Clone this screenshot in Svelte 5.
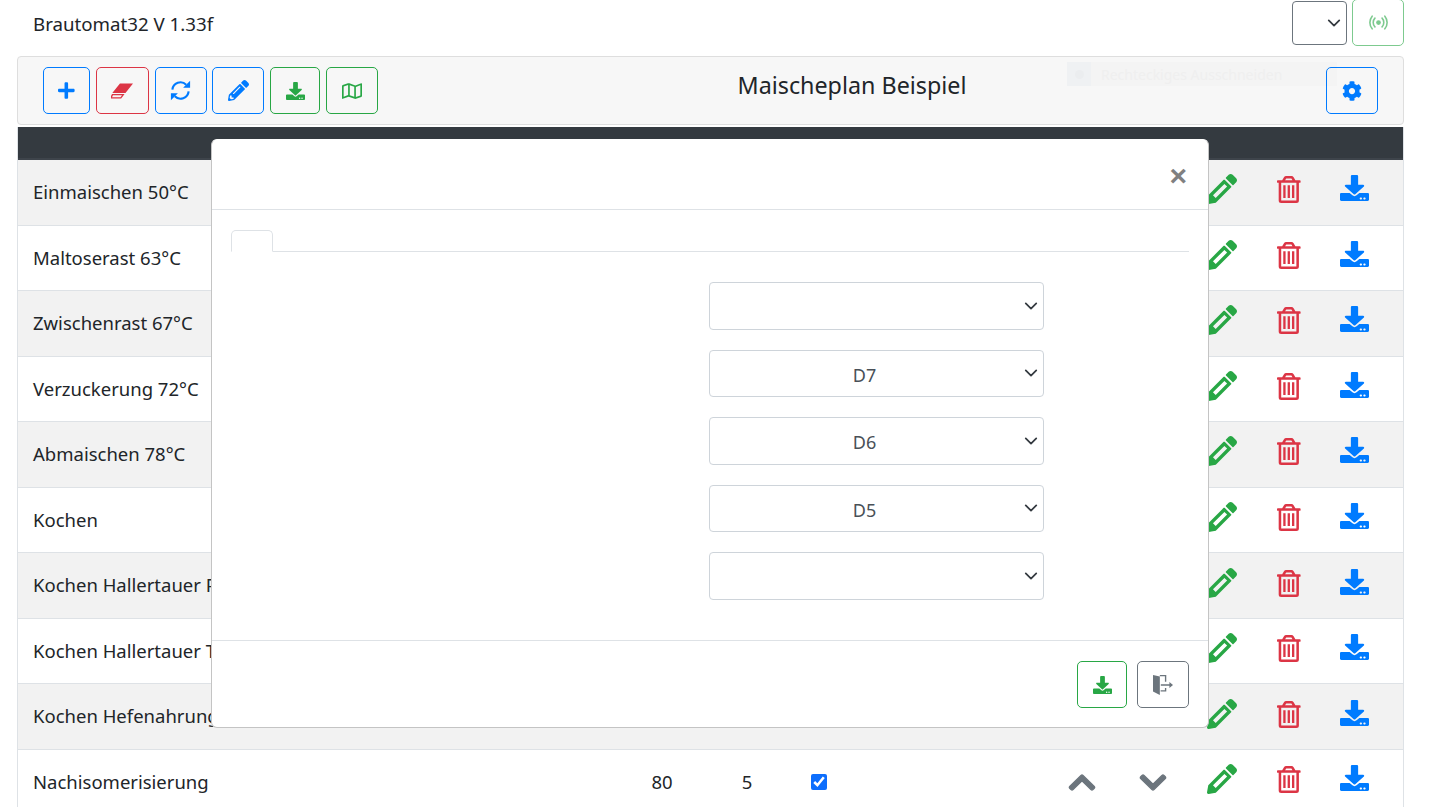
<script>
  const icons = {
    plus: [448, 'M416 208H272V64c0-17.67-14.33-32-32-32h-32c-17.67 0-32 14.33-32 32v144H32c-17.67 0-32 14.33-32 32v32c0 17.67 14.33 32 32 32h144v144c0 17.67 14.33 32 32 32h32c17.67 0 32-14.33 32-32V304h144c17.67 0 32-14.33 32-32v-32c0-17.67-14.33-32-32-32z'],
    eraser: [512, 'M208 80H512L336 300H30zM24 325H316L236 430H0V370zM46 355L24 400H222L256 355z'],
    pencil: [512, 'M497.9 142.1l-46.1 46.1c-4.7 4.7-12.3 4.7-17 0l-111-111c-4.7-4.7-4.7-12.3 0-17l46.1-46.1c18.7-18.7 49.1-18.7 67.9 0l60.1 60.1c18.8 18.7 18.8 49.1 0 67.9zM284.2 99.8L21.6 362.4.4 483.9c-2.9 16.4 11.4 30.6 27.8 27.8l121.5-21.3 262.6-262.6c4.7-4.7 4.7-12.3 0-17l-111-111c-4.8-4.7-12.4-4.7-17.1 0zM124.1 339.9c-5.5-5.5-5.5-14.3 0-19.8l154-154c5.5-5.5 14.3-5.5 19.8 0s5.5 14.3 0 19.8l-154 154c-5.5 5.5-14.3 5.5-19.8 0zM88 424h48v36.3l-64.5 11.3-31.1-31.1L51.7 376H88v48z'],
    pencilOpen: [512, 'M497.9 142.1l-46.1 46.1c-4.7 4.7-12.3 4.7-17 0l-111-111c-4.7-4.7-4.7-12.3 0-17l46.1-46.1c18.7-18.7 49.1-18.7 67.9 0l60.1 60.1c18.8 18.7 18.8 49.1 0 67.9zM284.2 99.8L21.6 362.4.4 483.9c-2.9 16.4 11.4 30.6 27.8 27.8l121.5-21.3 262.6-262.6c4.7-4.7 4.7-12.3 0-17l-111-111c-4.8-4.7-12.4-4.7-17.1 0zM297 169L343 215L148 409L102 363z'],
    download: [512, 'M216 0h80c13.3 0 24 10.7 24 24v168h87.7c17.8 0 26.7 21.5 14.1 34.1L269.7 378.3c-7.5 7.5-19.8 7.5-27.3 0L90.1 226.1c-12.6-12.6-3.7-34.1 14.1-34.1H192V24c0-13.3 10.7-24 24-24zm296 376v112c0 13.3-10.7 24-24 24H24c-13.3 0-24-10.7-24-24V376c0-13.3 10.7-24 24-24h146.7l49 49c20.1 20.1 52.5 20.1 72.6 0l49-49H488c13.3 0 24 10.7 24 24zm-124 88c0-11-9-20-20-20s-20 9-20 20 9 20 20 20 20-9 20-20zm64 0c0-11-9-20-20-20s-20 9-20 20 9 20 20 20 20-9 20-20z'],
    map: [576, 'M560.02 32c-1.96 0-3.98.37-5.96 1.16L384.01 96H384L212 35.28A64.252 64.252 0 0 0 191.76 32c-6.69 0-13.37 1.05-19.81 3.14L20.12 87.95A32.006 32.006 0 0 0 0 117.66v346.32C0 473.17 7.53 480 15.99 480c1.96 0 3.97-.37 5.96-1.16L192 416l172 60.71a63.98 63.98 0 0 0 40.05.15l151.83-52.81A31.996 31.996 0 0 0 576 394.34V48.02c0-9.19-7.53-16.02-15.98-16.02zM224 90.42l128 45.19v285.97l-128-45.19V90.42zM48 418.05V129.07l128-44.53v286.2l-.64.23L48 418.05zm480-35.13l-128 44.53V141.26l.64-.24L528 93.95v288.97z'],
    cog: [512, 'M487.4 315.7l-42.6-24.6c4.3-23.2 4.3-47 0-70.2l42.6-24.6c4.9-2.8 7.1-8.6 5.5-14-11.1-35.6-30-67.8-54.7-94.6-3.8-4.1-10-5.1-14.8-2.3L380.8 110c-17.9-15.4-38.5-27.3-60.8-35.1V25.8c0-5.6-3.9-10.5-9.4-11.7-36.7-8.2-74.3-7.8-109.2 0-5.5 1.2-9.4 6.1-9.4 11.7V75c-22.2 7.9-42.8 19.8-60.8 35.1L88.7 85.5c-4.9-2.8-11-1.9-14.8 2.3-24.7 26.7-43.6 58.9-54.7 94.6-1.7 5.4.6 11.2 5.5 14L67.3 221c-4.3 23.2-4.3 47 0 70.2l-42.6 24.6c-4.9 2.8-7.1 8.6-5.5 14 11.1 35.6 30 67.8 54.7 94.6 3.8 4.1 10 5.1 14.8 2.3l42.6-24.6c17.9 15.4 38.5 27.3 60.8 35.1v49.2c0 5.6 3.9 10.5 9.4 11.7 36.7 8.2 74.3 7.8 109.2 0 5.5-1.2 9.4-6.1 9.4-11.7v-49.2c22.2-7.9 42.8-19.8 60.8-35.1l42.6 24.6c4.9 2.8 11 1.9 14.8-2.3 24.7-26.7 43.6-58.9 54.7-94.6 1.5-5.5-.7-11.3-5.6-14.1zM256 336c-44.1 0-80-35.9-80-80s35.9-80 80-80 80 35.9 80 80-35.9 80-80 80z'],
    up: [448, 'M240.971 130.524l194.343 194.343c9.373 9.373 9.373 24.569 0 33.941l-22.667 22.667c-9.357 9.357-24.522 9.375-33.901.04L224 227.495 69.255 381.516c-9.379 9.335-24.544 9.317-33.901-.04l-22.667-22.667c-9.373-9.373-9.373-24.569 0-33.941L207.03 130.525c9.372-9.373 24.568-9.373 33.941-.001z'],
    down: [448, 'M207.029 381.476L12.686 187.132c-9.373-9.373-9.373-24.569 0-33.941l22.667-22.667c9.357-9.357 24.522-9.375 33.901-.04L224 284.505l154.745-154.021c9.379-9.335 24.544-9.317 33.901.04l22.667 22.667c9.373 9.373 9.373 24.569 0 33.941L240.971 381.476c-9.373 9.372-24.569 9.372-33.942 0z'],
    trash: [448, 'M432 80h-82.41l-34-56.7A48 48 0 0 0 274.41 0H173.59a48 48 0 0 0-41.16 23.3L98.41 80H16A16 16 0 0 0 0 96v16a16 16 0 0 0 16 16h16v336a48 48 0 0 0 48 48h288a48 48 0 0 0 48-48V128h16a16 16 0 0 0 16-16V96a16 16 0 0 0-16-16zM171.84 50.91A6 6 0 0 1 177 48h94a6 6 0 0 1 5.15 2.91L293.61 80H154.39zM368 464H80V128h288zM119 176h44v240h-44zM202 176h44v240h-44zM285 176h44v240h-44z'],
    door: [512, 'M0 0L175 40V512L0 420zM175 0H340V170H305V32H175zM305 330H340V420H195V388H305zM200 235H420V180L512 255L420 330V275H200z']
  };
  const rows = ['Einmaischen 50°C','Maltoserast 63°C','Zwischenrast 67°C','Verzuckerung 72°C','Abmaischen 78°C','Kochen','Kochen Hallertauer Perle','Kochen Hallertauer Tradition','Kochen Hefenahrung','Nachisomerisierung'];
  const selects = ['', 'D7', 'D6', 'D5', ''];
</script>

{#snippet icon(name, cls)}
  <svg class={cls} viewBox="0 0 {icons[name][0]} 512" preserveAspectRatio="none" aria-hidden="true"><path fill="currentColor" fill-rule="evenodd" d={icons[name][1]} /></svg>
{/snippet}

<div class="page">
  <header class="top">
    <span class="brand">Brautomat32 V 1.33f</span>
    <div class="top-tools">
      <select class="ws"><option></option></select>
      <button class="btn green faded w52 wsbtn" aria-label="WebSocket">
        <svg class="s-ws" viewBox="0 0 24 24" aria-hidden="true">
          <circle cx="12" cy="12" r="3" fill="currentColor" />
          <g fill="none" stroke="currentColor" stroke-width="2" stroke-linecap="round">
            <path d="M7.5 6.5a8 8 0 0 0 0 11" />
            <path d="M16.5 6.5a8 8 0 0 1 0 11" />
            <path d="M4 4a12.5 12.5 0 0 0 0 16" />
            <path d="M20 4a12.5 12.5 0 0 1 0 16" />
          </g>
        </svg>
      </button>
    </div>
  </header>

  <section class="toolbar">
    <div class="tools">
      <button class="btn blue w47" aria-label="Neu">{@render icon('plus', 's-plus')}</button>
      <button class="btn red w53" aria-label="Löschen">{@render icon('eraser', 's-er')}</button>
      <button class="btn blue w52" aria-label="Aktualisieren">
        <svg class="s-sync" viewBox="0 0 512 512" aria-hidden="true">
          <g fill="none" stroke="currentColor" stroke-width="52">
            <path d="M58 235A198 198 0 0 1 395 115" />
            <path d="M454 277A198 198 0 0 1 117 397" />
          </g>
          <path fill="currentColor" d="M490 20V190H320zM22 492V322H192z" />
        </svg>
      </button>
      <button class="btn blue w52" aria-label="Bearbeiten">{@render icon('pencil', 's-pen-s')}</button>
      <button class="btn green w50" aria-label="Speichern">{@render icon('download', 's-dl')}</button>
      <button class="btn green w52" aria-label="Plan">{@render icon('map', 's-map')}</button>
    </div>
    <h1>Maischeplan Beispiel</h1>
    <button class="btn blue w52" aria-label="Einstellungen">{@render icon('cog', 's-cog')}</button>
    <div class="ghost" aria-hidden="true"><span class="ghost-ic"><i></i></span><span class="ghost-tx">Rechteckiges Ausschneiden</span></div>
  </section>

  <div class="table">
    <div class="thead"></div>
    {#each rows as name, i}
      <div class="row" class:odd={i % 2 === 0}>
        <span class="name">{name}</span>
        {#if i === rows.length - 1}
          <span class="c c2">80</span>
          <span class="c c3">5</span>
          <span class="c c4"><input type="checkbox" checked /></span>
          <span class="c c5 gray">{@render icon('up', 's-chev')}</span>
          <span class="c c6 gray">{@render icon('down', 's-chev')}</span>
        {/if}
        <span class="c c7 green-t">{@render icon('pencilOpen', 's-pen')}</span>
        <span class="c c8 red-t">{@render icon('trash', 's-trash')}</span>
        <span class="c c9 blue-t">{@render icon('download', 's-down')}</span>
      </div>
    {/each}
  </div>

  <div class="modal">
    <div class="m-head"><span class="close">×</span></div>
    <div class="m-body">
      <div class="tabs"><span class="tab"></span></div>
      <div class="form">
        {#each selects as s}
          <select class="fs"><option>{s}</option></select>
        {/each}
      </div>
    </div>
    <div class="m-foot">
      <button class="btn green w50" aria-label="Speichern">{@render icon('download', 's-dl')}</button>
      <button class="btn gray-b w52" aria-label="Schließen">{@render icon('door', 's-door')}</button>
    </div>
  </div>
</div>

<style>
  :global(body) { margin: 0; overflow: hidden; background: #fff; }
  .page {
    position: relative; width: 1442px; height: 807px; overflow: hidden; box-sizing: border-box;
    padding: 0 38px 0 17px; color: #212529;
    font-family: "Noto Sans", "Open Sans", sans-serif; font-size: 18.5px;
  }
  .top { height: 56px; display: flex; justify-content: space-between; padding-left: 16px; box-sizing: border-box; }
  .brand { line-height: 48px; font-size: 18.7px; }
  .top-tools { display: flex; gap: 5px; align-items: flex-start; }
  .ws {
    width: 55px; height: 44px; margin-top: 1px; border: 1px solid #6c757d; border-radius: 4px; background-color: #fff;
    appearance: none; box-sizing: border-box;
    background-image: url("data:image/svg+xml,%3csvg xmlns='http://www.w3.org/2000/svg' viewBox='0 0 16 16'%3e%3cpath fill='none' stroke='%23343a40' stroke-linecap='round' stroke-linejoin='round' stroke-width='2' d='M2 5l6 6 6-6'/%3e%3c/svg%3e");
    background-repeat: no-repeat; background-position: right 5px center; background-size: 14px;
  }
  .btn {
    display: flex; align-items: center; justify-content: center; height: 47px; padding: 0; box-sizing: border-box;
    background: transparent; border: 1px solid; border-radius: 5px;
  }
  .wsbtn { margin-top: -1px; }
  .w47 { width: 47px; } .w50 { width: 50px; } .w52 { width: 52px; } .w53 { width: 53px; }
  .blue { color: #007bff; } .red { color: #dc3545; } .green { color: #28a745; }
  .gray-b { color: #6c757d; }
  .faded { opacity: .6; }
  .toolbar {
    position: relative; height: 69px; display: flex; align-items: flex-start; box-sizing: border-box;
    padding: 10px 25px; background: #f7f7f7; border: 1px solid #dedede; border-radius: 4px;
  }
  .tools { display: flex; gap: 5.8px; }
  h1 { flex: 1; margin: 0; text-align: center; font-size: 23.3px; font-weight: 400; line-height: 36px; }
  .ghost { position: absolute; left: 1049px; top: 5px; width: 270px; height: 24px; display: flex; background: rgba(0, 0, 0, .012); pointer-events: none; }
  .ghost-ic { width: 24px; background: rgba(0, 90, 180, .02); display: flex; align-items: center; justify-content: center; }
  .ghost-ic i { width: 9px; height: 9px; border-radius: 50%; background: #ebedef; }
  .ghost-tx { margin-left: 10px; color: #efefef; font-size: 14px; line-height: 25px; }
  .s-plus { height: 19px; }
  .s-er { height: 22px; width: 22px; }
  .s-sync { height: 21px; width: 21px; }
  .s-pen-s { height: 21px; width: 21px; }
  .s-dl { width: 19px; height: 18px; }
  .s-map { height: 18px; width: 20px; }
  .s-cog { height: 20px; }
  .s-ws { height: 19px; width: 19px; }
  .s-door { height: 20px; width: 20px; }
  .table {
    margin-top: 2px; margin-left: 1px; border-right: 1px solid #dee2e6;
    box-shadow: -1px 0 0 #dee2e6;
  }
  .thead { height: 31px; background: #343a40; border-bottom: 2px solid #3e444b; }
  .row {
    height: 65.56px; box-sizing: border-box; border-bottom: 1px solid #dee2e6;
    display: grid; align-items: center;
    grid-template-columns: 602px 84px 86px 58px 199px 70px 71px 68px 66px 65px 1fr;
  }
  .odd { background: #f2f2f2; }
  .name { padding: 0 0 1.6px 15px; white-space: nowrap; overflow: hidden; }
  .c { display: flex; justify-content: center; align-items: center; }
  .c2 { grid-column: 2; padding-bottom: 1.6px; } .c3 { grid-column: 3; padding-bottom: 1.6px; } .c4 { grid-column: 4; }
  .c5 { grid-column: 6; } .c6 { grid-column: 7; }
  .c7 { grid-column: 8; padding-bottom: 6px; } .c8 { grid-column: 9; padding-bottom: 5px; } .c9 { grid-column: 10; padding-bottom: 8px; }
  .gray { color: #6c757d; } .green-t { color: #28a745; } .red-t { color: #dc3545; } .blue-t { color: #007bff; }
  .s-chev { height: 29px; width: 26px; overflow: visible; }
  .s-chev path { stroke: currentColor; stroke-width: 24px; }
  .s-pen { height: 30px; width: 30px; }
  .s-trash { height: 27px; width: 23.6px; }
  .s-down { height: 26px; width: 29px; }
  input[type=checkbox] { width: 16px; height: 16px; margin: 0; accent-color: #0d6efd; }
  .modal {
    position: absolute; left: 211px; top: 139px; width: 998px; height: 589px; box-sizing: border-box;
    display: flex; flex-direction: column; background: #fff; border: 1px solid #c4c4c4; border-top-color: #fff; border-radius: 6px;
  }
  .m-head { height: 70px; flex: none; border-bottom: 1px solid #dee2e6; position: relative; box-sizing: border-box; }
  .close { position: absolute; right: 21px; top: 16px; font-size: 30px; font-weight: 700; line-height: 40px; color: #808080; font-family: "Liberation Sans", sans-serif; }
  .m-body { flex: 1; padding: 20px 19px 0; }
  .tabs { height: 21px; border-bottom: 1px solid #dee2e6; }
  .tab { display: block; width: 42px; height: 22px; box-sizing: border-box; border: 1px solid #dee2e6; border-bottom-color: #fff; border-radius: 5px 5px 0 0; background: #fff; }
  .form { display: grid; grid-template-columns: 335px; row-gap: 20px; padding: 30px 0 0 478px; }
  .fs {
    width: 335px; height: 47.5px; box-sizing: border-box; appearance: none; background-color: #fff; color: #495057;
    border: 1px solid #ced4da; border-radius: 4px; padding: 9px 36px 6px 12px; text-align: center;
    font-family: inherit; font-size: 18px;
    background-image: url("data:image/svg+xml,%3csvg xmlns='http://www.w3.org/2000/svg' viewBox='0 0 16 16'%3e%3cpath fill='none' stroke='%23343a40' stroke-linecap='round' stroke-linejoin='round' stroke-width='2' d='M2 5l6 6 6-6'/%3e%3c/svg%3e");
    background-repeat: no-repeat; background-position: right 5px center; background-size: 14px;
  }
  .m-foot { height: 87px; flex: none; border-top: 1px solid #dee2e6; box-sizing: border-box; display: flex; justify-content: flex-end; gap: 10px; padding: 20px 19px; }
</style>
